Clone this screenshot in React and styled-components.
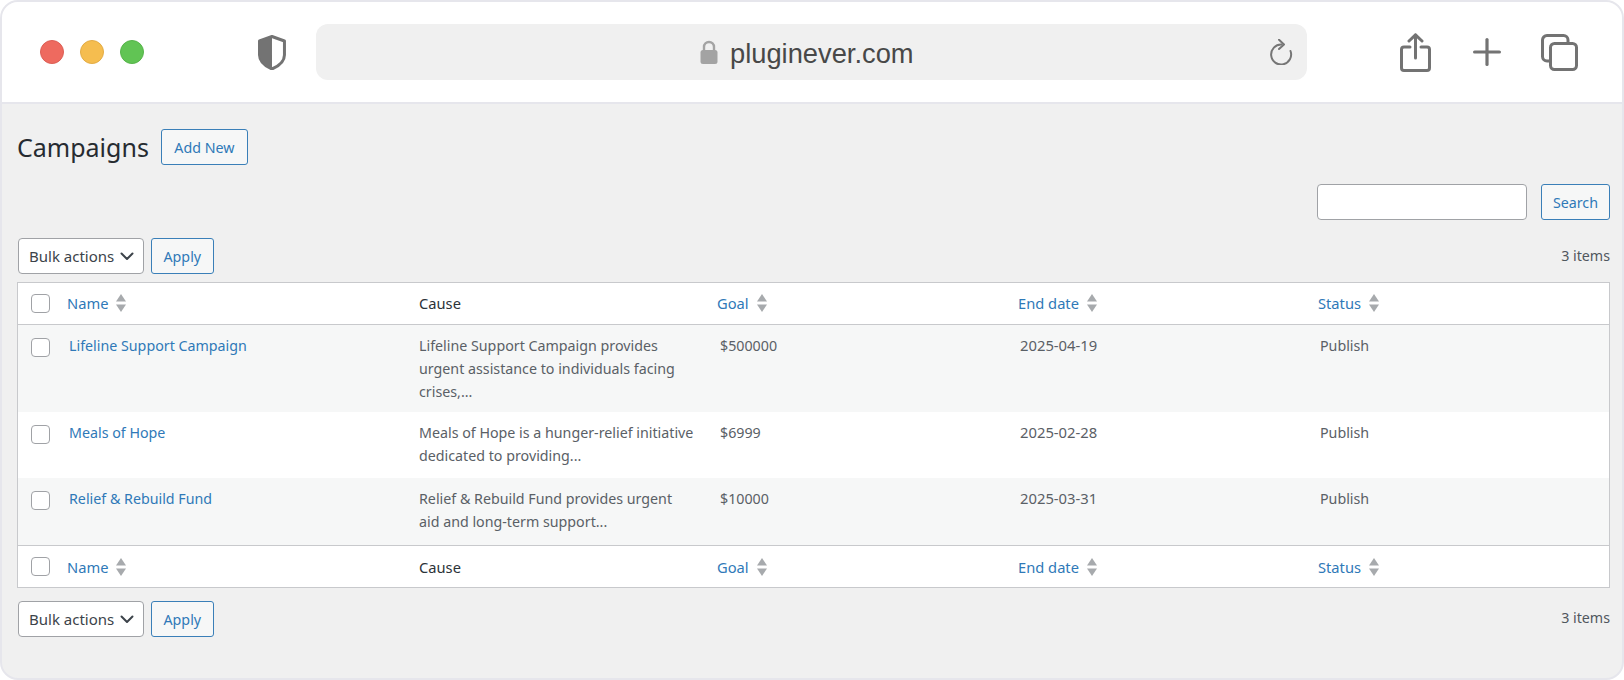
import React from 'react';
import styled, { createGlobalStyle } from 'styled-components';

const campaigns = [
  {
    name: 'Lifeline Support Campaign',
    cause: 'Lifeline Support Campaign provides urgent assistance to individuals facing crises,...',
    goal: '$500000',
    endDate: '2025-04-19',
    status: 'Publish',
  },
  {
    name: 'Meals of Hope',
    cause: 'Meals of Hope is a hunger-relief initiative dedicated to providing...',
    goal: '$6999',
    endDate: '2025-02-28',
    status: 'Publish',
  },
  {
    name: 'Relief & Rebuild Fund',
    cause: 'Relief & Rebuild Fund provides urgent aid and long-term support...',
    goal: '$10000',
    endDate: '2025-03-31',
    status: 'Publish',
  },
];

const GlobalStyle = createGlobalStyle`
  html, body {
    margin: 0;
    padding: 0;
    background: #ffffff;
  }
  * {
    box-sizing: border-box;
  }
`;

// Browser chrome
const Frame = styled.div`
  width: 1624px;
  height: 680px;
  border: 2px solid #e6e6ec;
  border-radius: 18px;
  background: #f0f0f0;
  overflow: hidden;
  font-family: "Noto Sans", "Open Sans", sans-serif;
  font-size: 14.25px;
`;

const Toolbar = styled.div`
  height: 102px;
  display: flex;
  align-items: center;
  padding: 0 44px 0 38px;
  background: #ffffff;
  border-bottom: 2px solid #e6e6ec;
`;

const Dots = styled.div`
  display: flex;
  gap: 16px;
  margin-right: 114px;
`;

const Dot = styled.span`
  width: 24px;
  height: 24px;
  border-radius: 50%;
  background: ${(props) => props.color};
  border: 1px solid ${(props) => props.edge};
`;

const UrlBar = styled.div`
  width: 992px;
  height: 56px;
  margin-left: 30px;
  padding: 0 14px 0 384px;
  display: flex;
  align-items: center;
  background: #f0f0f0;
  border-radius: 12px;
`;

const Domain = styled.span`
  margin-left: 12px;
  padding-top: 3px;
  font-family: "Liberation Sans", Arial, sans-serif;
  font-size: 27.3px;
  color: #484848;
  flex: 1;
`;

const ChromeActions = styled.div`
  display: flex;
  align-items: center;
  margin-left: 93px;
  gap: 40px;
`;

const PlusSlot = styled.span`
  display: flex;
  margin-left: 2px;
`;

// Page content
const Content = styled.div`
  padding: 25px 12px 0 15px;
`;

const HeadingRow = styled.div`
  display: flex;
  align-items: center;
  gap: 12px;
`;

const Heading = styled.h1`
  margin: 0;
  font-size: 25px;
  font-weight: 400;
  line-height: 36px;
  color: #262b30;
`;

const OutlineButton = styled.button`
  height: 36px;
  padding: 0 ${(props) => props.$pad || 11}px;
  border: 1px solid #3a7fb8;
  border-radius: 3px;
  background: #f6f7f7;
  color: #2f79b8;
  font: inherit;
  white-space: nowrap;
`;

const SearchRow = styled.div`
  display: flex;
  justify-content: flex-end;
  gap: 14px;
  margin-top: 19px;
`;

const SearchInput = styled.input`
  width: 210px;
  height: 36px;
  border: 1px solid #a0a2a6;
  border-radius: 4px;
  background: #ffffff;
`;

const TableNav = styled.div`
  display: flex;
  align-items: center;
  gap: 7px;
  margin-top: ${(props) => props.$top}px;
  padding-left: 1px;
`;

const BulkSelect = styled.div`
  width: 126px;
  height: 36px;
  padding: 0 9px 0 10px;
  display: flex;
  align-items: center;
  justify-content: space-between;
  border: 1px solid #a0a2a6;
  border-radius: 4px;
  background: #ffffff;
  color: #3c434a;
  font-size: 15px;
  white-space: nowrap;
`;

const ItemCount = styled.span`
  margin-left: auto;
  padding-bottom: ${(props) => props.$lift}px;
  color: #50575e;
`;

const Table = styled.table`
  width: 1593px;
  margin-top: 8px;
  table-layout: fixed;
  border-collapse: separate;
  border-spacing: 0;
  background: #ffffff;
  border: 1px solid #c8c9cc;
`;

const HeadCell = styled.th`
  height: 42px;
  padding: 0 0 ${(props) => (props.$foot ? 0 : 1)}px ${(props) => props.$pad}px;
  font-size: 14.7px;
  font-weight: 400;
  text-align: left;
  color: #2c3338;
  ${(props) => (props.$foot
    ? 'border-top: 1px solid #c8c9cc;'
    : 'border-bottom: 1px solid #c8c9cc;')}
`;

const SortLink = styled.a`
  display: inline-flex;
  align-items: center;
  gap: 8px;
  color: #2f79b8;
  text-decoration: none;
`;

const Row = styled.tr`
  height: ${(props) => (props.$last ? 67 : 66)}px;
  background: ${(props) => (props.$odd ? '#f6f7f7' : '#ffffff')};
`;

const Cell = styled.td`
  padding: 9px ${(props) => props.$right || 10}px 9px 10px;
  vertical-align: top;
  line-height: 23px;
  color: #5a6066;
  ${(props) => props.$date && 'font-size: 14.8px;'}
`;

const CheckCell = styled.td`
  padding: 13px 0 0 13px;
  vertical-align: top;
`;

const Check = styled.input.attrs({ type: 'checkbox' })`
  appearance: none;
  display: block;
  width: 19px;
  height: 19px;
  margin: 0;
  border: 1px solid #a0a2a6;
  border-radius: 4px;
  background: #ffffff;
`;

const RowLink = styled.a`
  color: #2f79b8;
  text-decoration: none;
`;

const ShieldIcon = () => (
  <svg width="28" height="36" viewBox="0 -1 28 36">
    <path d="M14 1.5 L26.5 6 V20 C26.5 26 21 31 14 34 C7 31 1.5 26 1.5 20 V6 Z" fill="none" stroke="#737373" strokeWidth="3" strokeLinejoin="round" />
    <path d="M14 1.5 L1.5 6 V20 C1.5 26 7 31 14 34 Z" fill="#737373" />
  </svg>
);

const LockIcon = () => (
  <svg width="18" height="25" viewBox="0 0 18 25">
    <path d="M4 11 V7 a5 5 0 0 1 10 0 V11" fill="none" stroke="#a3a3a3" strokeWidth="2.4" />
    <rect x="0.5" y="10" width="17" height="14" rx="2.5" fill="#a3a3a3" />
  </svg>
);

const ReloadIcon = () => (
  <svg width="24" height="26" viewBox="0 0 24 26" fill="none" stroke="#767676" strokeWidth="2" strokeLinecap="round" strokeLinejoin="round">
    <path d="M12.5 5.5 A10 10 0 1 0 21.5 12" />
    <path d="M10 0.8 L15 5.5 L10 10" />
  </svg>
);

const ShareIcon = () => (
  <svg width="31" height="39" viewBox="0 0 31 39" fill="none" stroke="#737373" strokeWidth="3" strokeLinecap="round" strokeLinejoin="round">
    <path d="M10 14 H4 a2.5 2.5 0 0 0 -2.5 2.5 V35 a2.5 2.5 0 0 0 2.5 2.5 H27 a2.5 2.5 0 0 0 2.5 -2.5 V16.5 a2.5 2.5 0 0 0 -2.5 -2.5 H21" />
    <path d="M15.5 25 V2" />
    <path d="M9 8 L15.5 1.8 L22 8" />
  </svg>
);

const PlusIcon = () => (
  <svg width="28" height="28" viewBox="0 0 28 28" fill="none" stroke="#737373" strokeWidth="3.2" strokeLinecap="round">
    <path d="M14 1.6 V26.4" />
    <path d="M1.6 14 H26.4" />
  </svg>
);

const CopyIcon = () => (
  <svg width="37" height="37" viewBox="0 0 37 37" fill="none" stroke="#737373" strokeWidth="3" strokeLinejoin="round">
    <rect x="9.5" y="9.5" width="26" height="26" rx="4" />
    <path d="M9.5 27 H6 a4.5 4.5 0 0 1 -4.5 -4.5 V6 A4.5 4.5 0 0 1 6 1.5 H22.5 A4.5 4.5 0 0 1 27 6 V9.5" />
  </svg>
);

const SortArrows = () => (
  <svg width="10" height="18" viewBox="0 0 10 18" fill="#a7aaad">
    <path d="M5 0 L10 7.5 H0 Z" />
    <path d="M5 18 L0 10.5 H10 Z" />
  </svg>
);

const Chevron = () => (
  <svg width="14" height="9" viewBox="0 0 14 9" fill="none" stroke="#3c434a" strokeWidth="2" strokeLinecap="round" strokeLinejoin="round">
    <path d="M1.5 1.5 L7 7 L12.5 1.5" />
  </svg>
);

function HeaderRow({ foot }) {
  return (
    <tr>
      <HeadCell $pad={13} $foot={foot}><Check /></HeadCell>
      <HeadCell $pad={8} $foot={foot}>
        <SortLink href="#">Name <SortArrows /></SortLink>
      </HeadCell>
      <HeadCell $pad={10} $foot={foot}>Cause</HeadCell>
      <HeadCell $pad={7} $foot={foot}>
        <SortLink href="#">Goal <SortArrows /></SortLink>
      </HeadCell>
      <HeadCell $pad={8} $foot={foot}>
        <SortLink href="#">End date <SortArrows /></SortLink>
      </HeadCell>
      <HeadCell $pad={8} $foot={foot}>
        <SortLink href="#">Status <SortArrows /></SortLink>
      </HeadCell>
    </tr>
  );
}

function BulkBar({ top, lift }) {
  return (
    <TableNav $top={top}>
      <BulkSelect>Bulk actions <Chevron /></BulkSelect>
      <OutlineButton $pad={11.5}>Apply</OutlineButton>
      <ItemCount $lift={lift}>3 items</ItemCount>
    </TableNav>
  );
}

function App() {
  return (
    <>
      <GlobalStyle />
      <Frame>
        <Toolbar>
          <Dots>
            <Dot color="#ee6a5f" edge="#dc5f55" />
            <Dot color="#f5bd4f" edge="#e3ac45" />
            <Dot color="#61c454" edge="#56b44a" />
          </Dots>
          <ShieldIcon />
          <UrlBar>
            <LockIcon />
            <Domain>pluginever.com</Domain>
            <ReloadIcon />
          </UrlBar>
          <ChromeActions>
            <ShareIcon />
            <PlusSlot><PlusIcon /></PlusSlot>
            <CopyIcon />
          </ChromeActions>
        </Toolbar>
        <Content>
          <HeadingRow>
            <Heading>Campaigns</Heading>
            <OutlineButton $pad={12.5}>Add New</OutlineButton>
          </HeadingRow>
          <SearchRow>
            <SearchInput />
            <OutlineButton>Search</OutlineButton>
          </SearchRow>
          <BulkBar top={18} lift={2} />
          <Table>
            <colgroup>
              <col width="41" />
              <col width="350" />
              <col width="301" />
              <col width="300" />
              <col width="300" />
              <col />
            </colgroup>
            <thead>
              <HeaderRow />
            </thead>
            <tbody>
              {campaigns.map((campaign, index) => (
                <Row
                  key={campaign.name}
                  $odd={index % 2 === 0}
                  $last={index === campaigns.length - 1}
                >
                  <CheckCell><Check /></CheckCell>
                  <Cell><RowLink href="#">{campaign.name}</RowLink></Cell>
                  <Cell $right={15}>{campaign.cause}</Cell>
                  <Cell>{campaign.goal}</Cell>
                  <Cell $date>{campaign.endDate}</Cell>
                  <Cell>{campaign.status}</Cell>
                </Row>
              ))}
            </tbody>
            <tfoot>
              <HeaderRow foot />
            </tfoot>
          </Table>
          <BulkBar top={13} lift={4} />
        </Content>
      </Frame>
    </>
  );
}

export default App;
